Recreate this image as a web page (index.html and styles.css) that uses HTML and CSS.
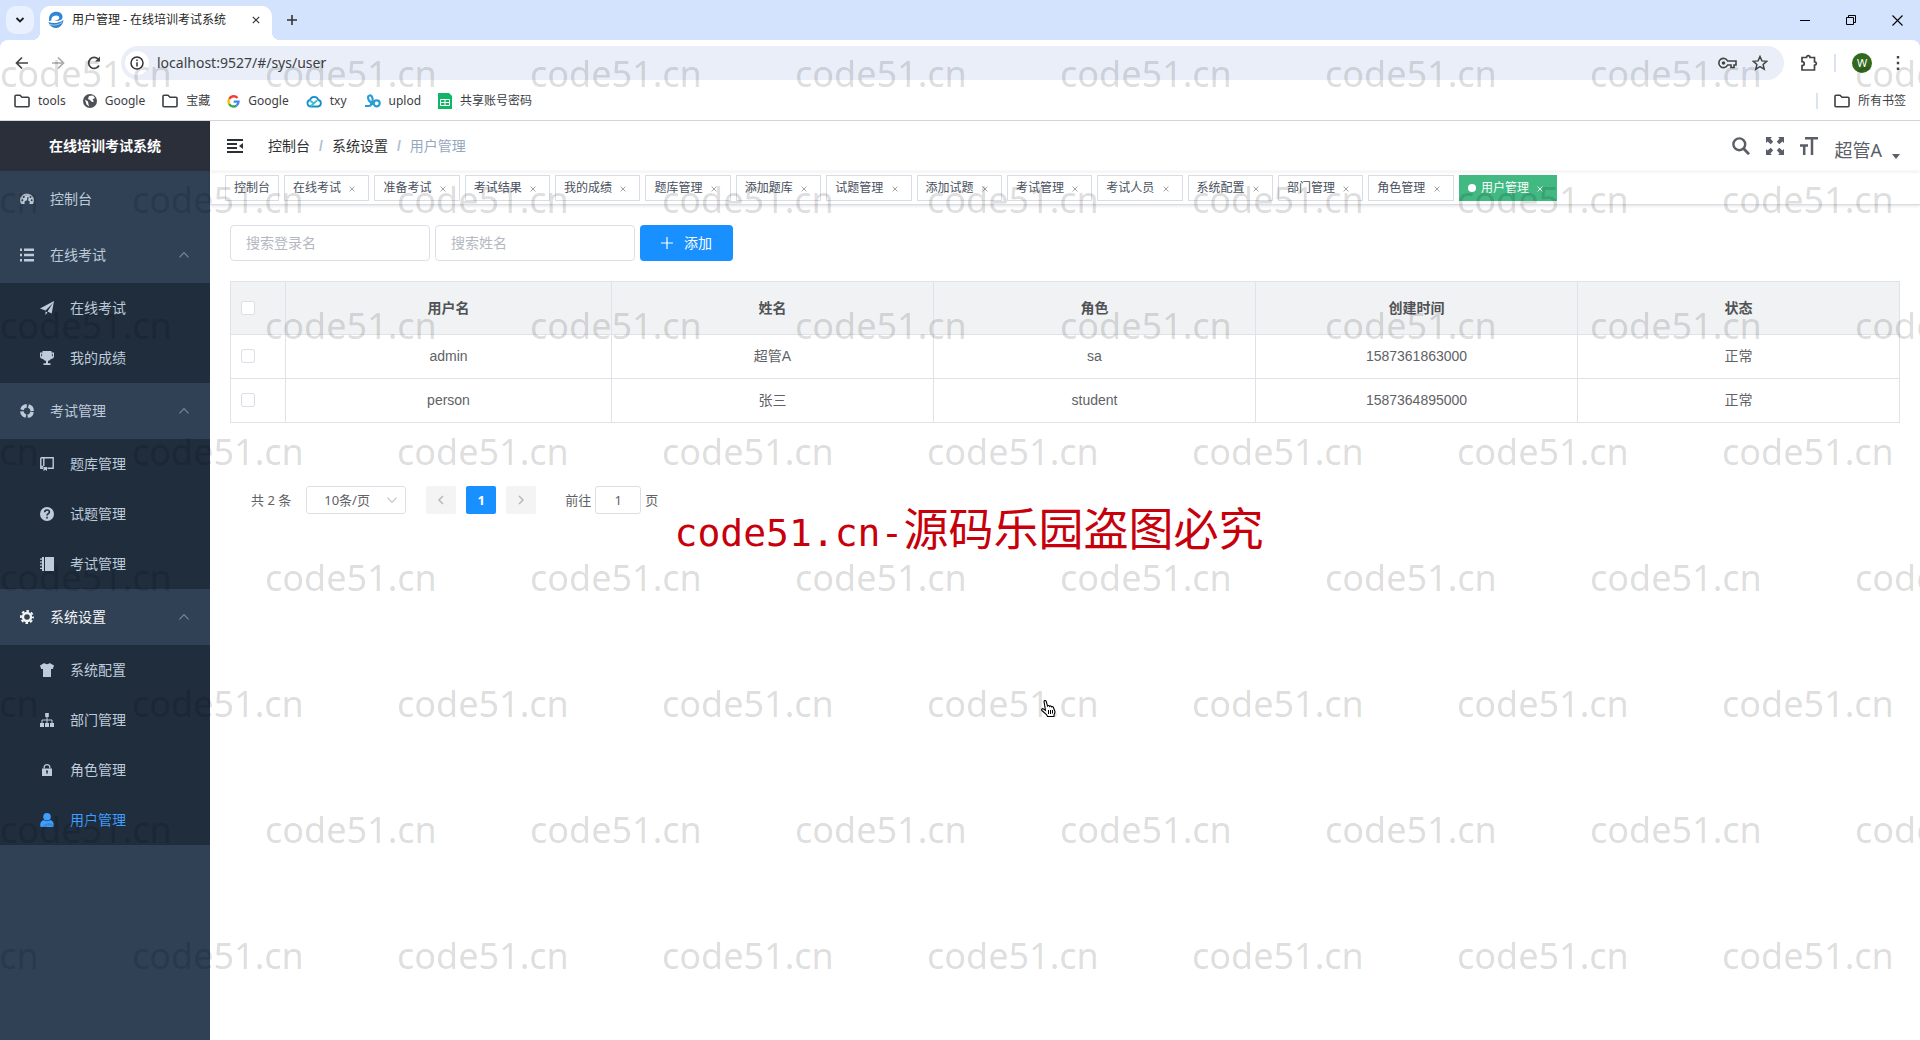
FILE: index.html
```html
<!DOCTYPE html>
<html lang="zh-CN">
<head>
<meta charset="utf-8">
<title>用户管理 - 在线培训考试系统</title>
<link rel="stylesheet" href="styles.css">
</head>
<body>
<svg class="sprite" aria-hidden="true">
  <symbol id="i-folder" viewBox="0 0 16 14"><path d="M1 2.200c0-.7.4-1 1-1h4l2 2h6c.7 0 1 .4 1 1v7.600c0 .7-.4 1-1 1H2c-.7 0-1-.4-1-1z" fill="none" stroke="currentColor" stroke-width="1.600"/></symbol>
  <symbol id="i-x" viewBox="0 0 10 10"><path d="M1 1l8 8M9 1L1 9" fill="none" stroke="currentColor" stroke-width="1.500"/></symbol>
  <symbol id="i-up" viewBox="0 0 12 12"><path d="M1.500 8.300L6 3.700l4.500 4.600" fill="none" stroke="currentColor" stroke-width="1.200"/></symbol>
  <symbol id="i-down" viewBox="0 0 12 12"><path d="M1.500 3.700L6 8.300l4.500-4.600" fill="none" stroke="currentColor" stroke-width="1.200"/></symbol>
</svg>

<header class="browser">
  <div class="tabstrip">
    <button class="tab-search" aria-label="搜索标签页"><svg width="10" height="10" viewBox="0 0 10 10"><path d="M1.500 3L5 6.500 8.500 3" fill="none" stroke="#1f1f1f" stroke-width="1.800"/></svg></button>
    <div class="tab">
      <svg width="16" height="18" viewBox="0 0 16 18"><path d="M1 8C1 3 5 .5 9 .8c4 .4 6 3.200 5.500 6-.6 2.700-4 3.600-8.500 3.200 3-.6 5.400-1.500 5.300-3.300C11.200 4.500 8 4 5.800 5 3.800 6 3 7.500 3.500 9.500L1 10z" fill="#2f86d6"/><path d="M.5 11c4 1.800 10 1.500 15-2-.8 5-4 8.300-8 8-3.500-.2-6-2.500-7-6z" fill="#3b7fc4"/><path d="M2 13.500c4 1.300 8 .6 12-2" stroke="#8fd0f0" fill="none"/></svg>
      <span class="tab-title">用户管理 - 在线培训考试系统</span>
      <button class="plain" aria-label="关闭标签页"><svg width="8" height="8"><use href="#i-x"/></svg></button>
    </div>
    <button class="plain new-tab" aria-label="新标签页"><svg width="12" height="12" viewBox="0 0 12 12"><path d="M6 1v10M1 6h10" stroke="#333" stroke-width="1.600"/></svg></button>
    <div class="window-controls">
      <button class="plain" aria-label="最小化"><svg width="10" height="10" viewBox="0 0 10 10"><path d="M0 5.500h10" stroke="#000"/></svg></button>
      <button class="plain" aria-label="还原"><svg width="10" height="10" viewBox="0 0 10 10"><path d="M.5 2.500h7v7h-7zM2.500 2.500v-2h7v7h-2" fill="none" stroke="#000"/></svg></button>
      <button class="plain" aria-label="关闭"><svg width="11" height="11" viewBox="0 0 11 11"><path d="M.5.5l10 10M10.500.5l-10 10" stroke="#000" stroke-width="1.100"/></svg></button>
    </div>
  </div>
  <div class="toolbar">
    <div class="nav-buttons">
      <button class="plain" aria-label="后退"><svg width="14" height="14" viewBox="0 0 14 14"><path d="M13 7H2M7 1.500L1.500 7 7 12.500" fill="none" stroke="#444" stroke-width="1.700"/></svg></button>
      <button class="plain" aria-label="前进"><svg width="14" height="14" viewBox="0 0 14 14"><path d="M1 7h11M7 1.500L12.500 7 7 12.500" fill="none" stroke="#aaa" stroke-width="1.700"/></svg></button>
      <button class="plain" aria-label="刷新"><svg width="14" height="14" viewBox="0 0 14 14"><path d="M12 9.500A5.500 5.500 0 1 1 11.500 3.500L12.500 5" fill="none" stroke="#444" stroke-width="1.700"/><path d="M13 .5v5H8z" fill="#444"/></svg></button>
    </div>
    <div class="omnibox">
      <span class="site-info"><svg width="14" height="14" viewBox="0 0 14 14"><circle cx="7" cy="7" r="6" fill="none" stroke="#333" stroke-width="1.500"/><path d="M7 6.200V10.500M7 3.500V5" stroke="#333" stroke-width="1.500"/></svg></span>
      <input class="url" aria-label="地址" value="localhost:9527/#/sys/user">
      <button class="plain" aria-label="密码"><svg width="19" height="12" viewBox="0 0 19 12"><path d="M9.600 4A4.600 4.600 0 1 0 9.600 8H13v2.500h3V8h2V4z" fill="none" stroke="#444" stroke-width="1.600"/><circle cx="5.500" cy="6" r="1.800" fill="#444"/></svg></button>
      <button class="plain" aria-label="收藏"><svg width="16" height="16" viewBox="0 0 16 16"><path d="M8 1.500l1.900 4.400 4.800.4-3.600 3.200 1.100 4.700L8 11.700l-4.200 2.500 1.100-4.700L1.300 6.300l4.800-.4z" fill="none" stroke="#444" stroke-width="1.500"/></svg></button>
    </div>
    <div class="profile">
      <button class="plain" aria-label="扩展程序"><svg width="18" height="18" viewBox="0 0 18 18"><path d="M2 3.500h4.500c0-2.500 3.500-2.500 3.500 0h4.500v4.300c2.500.2 2.500 3.200 0 3.400v4.800H2v-4.300c3-.3 3-3.700 0-4z" fill="none" stroke="#444" stroke-width="1.700"/></svg></button>
      <span class="divider"></span>
      <button class="avatar" aria-label="W 的账户">W</button>
      <button class="plain" aria-label="菜单"><svg width="4" height="16" viewBox="0 0 4 16"><path d="M.8 1h2.400v2.400H.8zM.8 6.800h2.400v2.400H.8zM.8 12.600h2.400V15H.8z" fill="#444"/></svg></button>
    </div>
  </div>
  <nav class="bookmarks" aria-label="书签">
    <a href="#"><svg width="16" height="14"><use href="#i-folder"/></svg>tools</a>
    <a href="#"><svg width="14" height="14" viewBox="0 0 14 14"><circle cx="7" cy="7" r="7" fill="#4d5156"/><path d="M2 5.500l3 2 .5 3 1 2-3-2zM6 2l4-.5L12 4 9.500 5.500 11 7.500 9 8 7 6 5 5z" fill="#fff"/></svg>Google</a>
    <a href="#"><svg width="16" height="14"><use href="#i-folder"/></svg>宝藏</a>
    <a href="#"><svg width="13" height="13" viewBox="0 0 13 13" fill="none" stroke-width="2.400"><path d="M10.500 3A5 5 0 0 0 2.200 4" stroke="#ea4335"/><path d="M2.200 4a5.200 5.200 0 0 0 0 5" stroke="#fbbc05"/><path d="M2.200 9a5 5 0 0 0 7.300 1.600" stroke="#34a853"/><path d="M9.500 10.600A5 5 0 0 0 11.500 6.600H6.700" stroke="#4285f4"/></svg>Google</a>
    <a href="#"><svg width="16" height="13" viewBox="0 0 16 13" fill="none" stroke="#168fc4" stroke-width="1.800"><path d="M4.500 11.500a3.300 3.300 0 0 1-.5-6.500 4.300 4.300 0 0 1 8.300 0 3.300 3.300 0 0 1-.3 6.500z"/><path d="M4.500 11.300L11 5.500M3.500 5.300L8 8.500" stroke="#2fc0d5"/></svg>txy</a>
    <a href="#"><svg width="17" height="14" viewBox="0 0 17 14" fill="none" stroke="#2b9dd6" stroke-width="2.200"><path d="M1 12h4c2.500 0 3-3 1-4.500S3 2 5.500 1.500 9 4 8.500 8v3"/><circle cx="12.700" cy="9.300" r="3"/></svg>uplod</a>
    <a href="#"><svg width="14" height="16" viewBox="0 0 14 16"><path d="M0 0h11l3 3v13H0z" fill="#10b566"/><path d="M2.500 6.500h9v6h-9zM2.500 9.500h9M7 6.500v6" fill="none" stroke="#fff"/></svg>共享账号密码</a>
    <a class="all-bookmarks" href="#"><svg width="16" height="14"><use href="#i-folder"/></svg>所有书签</a>
  </nav>
</header>

<div class="app">
  <aside class="sidebar">
    <h1 class="brand">在线培训考试系统</h1>
    <ul class="menu">
      <li><a class="item" href="#"><svg width="14" height="14" viewBox="0 0 14 14"><path d="M0 8.200a7 6.700 0 0 1 14 0c0 1.500-.4 2.800-1 3.800H9.300a2.400 2.400 0 0 0-1.200-3.500L8.700 5H7.400l-.5 3.400A2.400 2.400 0 0 0 4.700 12H1c-.6-1-1-2.300-1-3.800z" fill="currentColor"/><g fill="#304156"><circle cx="2.400" cy="8.300" r="1"/><circle cx="3.800" cy="4.900" r="1"/><circle cx="11.600" cy="8.300" r="1"/><circle cx="10.500" cy="4.900" r="1"/></g></svg>控制台</a></li>
      <li>
        <button class="item"><svg width="14" height="14" viewBox="0 0 14 14"><path d="M0 .5h2V3H0zM0 5.700h2v2.500H0zM0 11h2v2.500H0zM4 .5h10V3H4zM4 5.700h10v2.500H4zM4 11h10v2.500H4z" fill="currentColor"/></svg>在线考试<svg class="chev" width="12" height="12"><use href="#i-up"/></svg></button>
        <ul class="submenu">
          <li><a class="item" href="#"><svg width="14" height="14" viewBox="0 0 14 14"><path d="M14 0l-2.300 12.500L7.500 10.500 13 2 5.500 9.500 0 7.500zM5.500 10.500l2 1L5.500 14z" fill="currentColor"/></svg>在线考试</a></li>
          <li><a class="item" href="#"><svg width="14" height="14" viewBox="0 0 14 14"><path d="M2.500 0h9v1.500H14v4c0 1.500-1.500 2.500-3 2.500-.7 1-1.700 1.700-3 2v2.200h2.500V14h-7v-1.800H6V10c-1.300-.3-2.300-1-3-2-1.500 0-3-1-3-2.500v-4h2.500z" fill="currentColor"/><path d="M1.600 2.800v2.500M12.400 2.800v2.500" stroke="#1f2d3d" stroke-width=".8"/></svg>我的成绩</a></li>
        </ul>
      </li>
      <li>
        <button class="item"><svg width="14" height="14" viewBox="0 0 14 14"><circle cx="7" cy="7" r="5.200" fill="none" stroke="currentColor" stroke-width="3.400" stroke-dasharray="6.400 1.760" stroke-dashoffset="-.9"/></svg>考试管理<svg class="chev" width="12" height="12"><use href="#i-up"/></svg></button>
        <ul class="submenu">
          <li><a class="item" href="#"><svg width="14" height="14" viewBox="0 0 14 14"><path d="M.8.800h12.400v10.400H7.500M3 11.200H.8V.8M3.800 1v8M.8 9.500h2.500" fill="none" stroke="currentColor" stroke-width="1.400"/><path d="M3.500 10h3.500v4l-1.700-1.200L3.500 14z" fill="currentColor"/></svg>题库管理</a></li>
          <li><a class="item" href="#"><svg width="14" height="14" viewBox="0 0 14 14"><circle cx="7" cy="7" r="7" fill="currentColor"/><path d="M4.700 5.300c0-3 4.700-3 4.700-.3C9.400 6.700 7 6.600 7 8.500M7 9.700v1.700" fill="none" stroke="#1f2d3d" stroke-width="1.600"/></svg>试题管理</a></li>
          <li><a class="item" href="#"><svg width="14" height="14" viewBox="0 0 14 14"><path d="M5 0h9v14H5zM2 0h2v14H2zM0 1.500h2.500v1.200H0zM0 4.500h2.500v1.200H0zM0 7.500h2.500v1.200H0zM0 10.800h2.500V12H0z" fill="currentColor"/></svg>考试管理</a></li>
        </ul>
      </li>
      <li>
        <button class="item is-open"><svg width="14" height="14" viewBox="0 0 14 14"><circle cx="7" cy="7" r="4" fill="none" stroke="currentColor" stroke-width="2.400"/><circle cx="7" cy="7" r="6" fill="none" stroke="currentColor" stroke-width="2" stroke-dasharray="2.600 2.110" stroke-dashoffset="1.300"/></svg>系统设置<svg class="chev" width="12" height="12"><use href="#i-up"/></svg></button>
        <ul class="submenu">
          <li><a class="item" href="#"><svg width="14" height="14" viewBox="0 0 14 14"><path d="M4.300 0c1 1.500 4.400 1.500 5.400 0L14 2.500 12.800 6H11v8H3V6H1.200L0 2.500z" fill="currentColor"/></svg>系统配置</a></li>
          <li><a class="item" href="#"><svg width="14" height="14" viewBox="0 0 14 14"><path d="M5.200 0h3.600v4H5.200zM0 10h4v4H0zM5 10h4v4H5zM10 10h4v4h-4z" fill="currentColor"/><path d="M7 4v6M2 10V7h10v3" fill="none" stroke="currentColor"/></svg>部门管理</a></li>
          <li><a class="item" href="#"><svg width="14" height="14" viewBox="0 0 14 14"><path d="M2 5.500h10V13H2z" fill="currentColor"/><path d="M4.200 5.500V4c0-3.300 5.600-3.300 5.600 0v1.500" fill="none" stroke="currentColor" stroke-width="1.300"/><path d="M7 7.500v3.300M6 8.200h2" stroke="#1f2d3d" stroke-width="1.300"/></svg>角色管理</a></li>
          <li><a class="item is-active" href="#"><svg width="14" height="14" viewBox="0 0 14 14"><circle cx="7" cy="3.800" r="3.800" fill="currentColor"/><path d="M3.500 7c2 1.500 5 1.500 7 0 2.500 1 3.500 3 3.200 6 0 .7-.5 1-1 1H1.300c-.5 0-1-.3-1-1C0 10 1 8 3.500 7z" fill="currentColor"/></svg>用户管理</a></li>
        </ul>
      </li>
    </ul>
  </aside>

  <div class="content">
    <div class="navbar">
      <button class="plain" aria-label="折叠菜单"><svg width="16" height="14" viewBox="0 0 16 14"><path d="M0 1h16M0 5h10M0 9h10M0 13h16" stroke="#2b2f36" stroke-width="1.800"/><path d="M16 4v6l-4-3z" fill="#2b2f36"/></svg></button>
      <ol class="breadcrumb">
        <li><a href="#">控制台</a></li>
        <li><a href="#">系统设置</a></li>
        <li><span>用户管理</span></li>
      </ol>
      <div class="actions">
        <button class="plain" aria-label="搜索"><svg width="18" height="18" viewBox="0 0 18 18"><circle cx="7.300" cy="7.300" r="5.900" fill="none" stroke="#5a5e66" stroke-width="2.400"/><path d="M11.500 11.500l5.500 5.700" stroke="#5a5e66" stroke-width="2.800"/></svg></button>
        <button class="plain" aria-label="全屏"><svg width="18" height="18" viewBox="0 0 18 18"><path d="M0 0h6L4.400 1.600 7.200 4.700 4.700 7.200 1.600 4.400 0 6zM18 0h-6l1.600 1.600-2.800 3.100 2.500 2.500 3.100-2.800L18 6zM0 18h6l-1.600-1.600 2.800-3.100-2.500-2.500-3.100 2.800L0 12zM18 18h-6l1.600-1.600-2.800-3.100 2.500-2.500 3.100 2.800L18 12z" fill="#5a5e66"/></svg></button>
        <button class="plain" aria-label="字体大小"><svg width="18" height="18" viewBox="0 0 18 18"><path d="M5 1.300h13M12 1v17M0 8.400h8M4.200 8v10" stroke="#5a5e66" stroke-width="2.500"/></svg></button>
        <button class="user-menu">超管A<svg width="8" height="5" viewBox="0 0 8 5"><path d="M0 0h8L4 5z" fill="#5a5e66"/></svg></button>
      </div>
    </div>

    <ul class="tags">
      <li><a href="#">控制台</a></li>
      <li><a href="#">在线考试</a> <button aria-label="关闭"><svg width="6" height="6"><use href="#i-x"/></svg></button></li>
      <li><a href="#">准备考试</a> <button aria-label="关闭"><svg width="6" height="6"><use href="#i-x"/></svg></button></li>
      <li><a href="#">考试结果</a> <button aria-label="关闭"><svg width="6" height="6"><use href="#i-x"/></svg></button></li>
      <li><a href="#">我的成绩</a> <button aria-label="关闭"><svg width="6" height="6"><use href="#i-x"/></svg></button></li>
      <li><a href="#">题库管理</a> <button aria-label="关闭"><svg width="6" height="6"><use href="#i-x"/></svg></button></li>
      <li><a href="#">添加题库</a> <button aria-label="关闭"><svg width="6" height="6"><use href="#i-x"/></svg></button></li>
      <li><a href="#">试题管理</a> <button aria-label="关闭"><svg width="6" height="6"><use href="#i-x"/></svg></button></li>
      <li><a href="#">添加试题</a> <button aria-label="关闭"><svg width="6" height="6"><use href="#i-x"/></svg></button></li>
      <li><a href="#">考试管理</a> <button aria-label="关闭"><svg width="6" height="6"><use href="#i-x"/></svg></button></li>
      <li><a href="#">考试人员</a> <button aria-label="关闭"><svg width="6" height="6"><use href="#i-x"/></svg></button></li>
      <li><a href="#">系统配置</a> <button aria-label="关闭"><svg width="6" height="6"><use href="#i-x"/></svg></button></li>
      <li><a href="#">部门管理</a> <button aria-label="关闭"><svg width="6" height="6"><use href="#i-x"/></svg></button></li>
      <li><a href="#">角色管理</a> <button aria-label="关闭"><svg width="6" height="6"><use href="#i-x"/></svg></button></li>
      <li class="is-active"><span class="dot"></span> <a href="#">用户管理</a> <button aria-label="关闭"><svg width="6" height="6"><use href="#i-x"/></svg></button></li>
    </ul>

    <main class="page">
      <form class="filters">
        <input type="text" placeholder="搜索登录名" aria-label="搜索登录名">
        <input type="text" placeholder="搜索姓名" aria-label="搜索姓名">
        <button type="button"><svg width="12" height="12" viewBox="0 0 12 12"><path d="M6 0v12M0 6h12" stroke="#fff" stroke-width="1.200"/></svg>添加</button>
      </form>

      <table class="users">
        <colgroup><col class="col-check"><col class="col-name"><col><col><col><col></colgroup>
        <thead>
          <tr><th><input type="checkbox" aria-label="全选"></th><th>用户名</th><th>姓名</th><th>角色</th><th>创建时间</th><th>状态</th></tr>
        </thead>
        <tbody>
          <tr><td><input type="checkbox" aria-label="选择 admin"></td><td>admin</td><td>超管A</td><td>sa</td><td>1587361863000</td><td>正常</td></tr>
          <tr><td><input type="checkbox" aria-label="选择 person"></td><td>person</td><td>张三</td><td>student</td><td>1587364895000</td><td>正常</td></tr>
        </tbody>
      </table>

      <div class="pagination">
        <span class="total">共 2 条</span>
        <span class="page-size"><select aria-label="每页条数"><option>10条/页</option></select><svg width="12" height="12"><use href="#i-down"/></svg></span>
        <div class="pager">
          <button aria-label="上一页" disabled><svg width="12" height="12" viewBox="0 0 12 12"><path d="M8 2L4 6l4 4" fill="none" stroke="currentColor" stroke-width="1.500"/></svg></button>
          <button class="is-current">1</button>
          <button aria-label="下一页" disabled><svg width="12" height="12" viewBox="0 0 12 12"><path d="M4 2l4 4-4 4" fill="none" stroke="currentColor" stroke-width="1.500"/></svg></button>
        </div>
        <label class="jump">前往<input type="text" value="1">页</label>
      </div>
    </main>
  </div>
</div>

<div class="watermark" aria-hidden="true">
  <div><span>code51.cn</span><span>code51.cn</span><span>code51.cn</span><span>code51.cn</span><span>code51.cn</span><span>code51.cn</span><span>code51.cn</span><span>code51.cn</span></div>
  <div><span>code51.cn</span><span>code51.cn</span><span>code51.cn</span><span>code51.cn</span><span>code51.cn</span><span>code51.cn</span><span>code51.cn</span><span>code51.cn</span></div>
  <div><span>code51.cn</span><span>code51.cn</span><span>code51.cn</span><span>code51.cn</span><span>code51.cn</span><span>code51.cn</span><span>code51.cn</span><span>code51.cn</span></div>
  <div><span>code51.cn</span><span>code51.cn</span><span>code51.cn</span><span>code51.cn</span><span>code51.cn</span><span>code51.cn</span><span>code51.cn</span><span>code51.cn</span></div>
  <div><span>code51.cn</span><span>code51.cn</span><span>code51.cn</span><span>code51.cn</span><span>code51.cn</span><span>code51.cn</span><span>code51.cn</span><span>code51.cn</span></div>
  <div><span>code51.cn</span><span>code51.cn</span><span>code51.cn</span><span>code51.cn</span><span>code51.cn</span><span>code51.cn</span><span>code51.cn</span><span>code51.cn</span></div>
  <div><span>code51.cn</span><span>code51.cn</span><span>code51.cn</span><span>code51.cn</span><span>code51.cn</span><span>code51.cn</span><span>code51.cn</span><span>code51.cn</span></div>
  <div><span>code51.cn</span><span>code51.cn</span><span>code51.cn</span><span>code51.cn</span><span>code51.cn</span><span>code51.cn</span><span>code51.cn</span><span>code51.cn</span></div>
</div>
<p class="notice"><span>code51.cn-</span>源码乐园盗图必究</p>
<svg class="pointer" width="16" height="18" viewBox="0 0 16 18" aria-hidden="true"><path d="M3 1.500c0-1.300 2-1.300 2.200 0L6.500 6c.6-.8 1.800-.6 2 .3.700-.7 1.900-.4 2 .5.900-.6 1.800 0 2 1l1.400 3.400c.3 1-.2 2-.7 3l-.3 2.300H6.500L5.500 14.500.9 10.500c-1-1 .4-2.400 1.600-1.500l2 1.300z" fill="#fff" stroke="#000" stroke-width="1.100"/><path d="M7.500 10v4M9.500 10v4M11.500 10v3.500" stroke="#000"/></svg>
</body>
</html>
```

FILE: styles.css
```css
* { box-sizing: border-box; }

body {
  position: relative;
  display: flex;
  flex-direction: column;
  min-height: 100vh;
  margin: 0;
  overflow-x: hidden;
  background: #fff;
  color: #606266;
  font: 14px/20px "Liberation Sans", "Noto Sans CJK SC", sans-serif;
}

button, input, select { margin: 0; font: inherit; color: inherit; }
button { display: inline-flex; align-items: center; justify-content: center; padding: 0; border: 0; background: none; }
a { color: inherit; text-decoration: none; }
ul, ol { margin: 0; padding: 0; list-style: none; }
svg { flex: none; }
.sprite { position: absolute; width: 0; height: 0; }
.plain { flex: none; color: #333; }

/* Browser chrome */
.browser {
  background: #d3e3fd;
  border-bottom: 1px solid #d5d8dc;
  color: #3c4043;
  font-family: "Noto Sans", "Noto Sans CJK SC", sans-serif;
  font-size: 12px;
}
.tabstrip { display: flex; align-items: center; height: 40px; padding-left: 6px; }
.tab-search { width: 28px; height: 28px; border-radius: 10px; background: #e9f1fe; }
.tab {
  position: relative;
  display: flex;
  align-items: center;
  align-self: flex-end;
  gap: 8px;
  width: 232px;
  height: 34px;
  margin-left: 6px;
  padding: 0 12px 6px 8px;
  border-radius: 10px 10px 0 0;
  background: #fff;
  color: #1f1f1f;
}
.tab::before, .tab::after {
  content: "";
  position: absolute;
  bottom: 0;
  width: 8px;
  height: 8px;
}
.tab::before { right: 100%; background: radial-gradient(circle at 0 0, transparent 8px, #fff 8px); }
.tab::after { left: 100%; background: radial-gradient(circle at 100% 0, transparent 8px, #fff 8px); }
.tab-title { flex: 1; white-space: nowrap; }
.new-tab { margin-left: 14px; }
.window-controls { display: flex; margin-left: auto; }
.window-controls button { width: 46px; height: 40px; }

.toolbar {
  display: flex;
  align-items: center;
  height: 46px;
  padding: 0 20px 0 15px;
  border-radius: 8px 8px 0 0;
  background: #fff;
}
.nav-buttons { display: flex; gap: 22px; }
.omnibox {
  display: flex;
  flex: 1;
  align-items: center;
  gap: 15px;
  height: 34px;
  margin: 0 16px 0 20px;
  padding: 0 16px 0 4px;
  border-radius: 17px;
  background: #e9eef8;
}
.site-info { display: grid; place-items: center; width: 24px; height: 24px; border-radius: 50%; background: #fff; }
.url { flex: 1; margin-left: -7px; padding: 0; border: 0; outline: 0; background: none; font-size: 14px; }
.profile { display: flex; align-items: center; gap: 16px; }
.avatar { width: 20px; height: 20px; margin-right: 8px; border-radius: 50%; background: #33691e; color: #fff; font-size: 11px; }
.divider { width: 2px; height: 18px; background: #dbe3f3; }

.bookmarks { display: flex; align-items: center; gap: 17px; height: 34px; padding: 0 14px 4px; background: #fff; white-space: nowrap; }
.bookmarks a { display: flex; align-items: center; gap: 8px; line-height: 16px; }
.bookmarks .all-bookmarks { margin-left: auto; padding-left: 16px; border-left: 2px solid #dbe3f3; }

/* Application */
.app { display: flex; flex: 1; }
.sidebar { flex: none; width: 210px; background: #304156; color: #bfcbd9; }
.brand { height: 50px; margin: 0; background: #2b2f3a; color: #fff; font-size: 14px; line-height: 50px; text-align: center; }
.item { display: flex; align-items: center; justify-content: flex-start; gap: 16px; width: 100%; height: 56px; padding: 0 20px; }
.chev { margin-left: auto; color: #7b8593; }
.submenu { background: #1f2d3d; }
.submenu .item { height: 50px; padding-left: 40px; }
.item.is-open { color: #f4f4f5; }
.item.is-active { color: #409eff; }

.content { flex: 1; min-width: 0; }
.navbar { display: flex; align-items: center; height: 50px; padding: 0 20px 0 17px; box-shadow: 0 1px 3px rgba(0, 21, 41, .08); }
.breadcrumb { display: flex; margin-left: 25px; color: #303133; }
.breadcrumb li + li::before { content: "/"; margin: 0 9px; color: #b4bccc; font-weight: 700; }
.breadcrumb span { color: #97a8be; }
.actions { display: flex; align-items: center; gap: 16px; margin-left: auto; }
.user-menu { gap: 10px; padding-top: 8px; color: #5a5e66; font: 18px/26px "Noto Sans", "Noto Sans CJK SC", sans-serif; }
.user-menu svg { margin-top: 12px; }

.tags { display: flex; gap: 5px; height: 34px; padding: 4px 15px 0; border-bottom: 1px solid #d8dce5; box-shadow: 0 1px 3px rgba(0, 0, 0, .12); }
.tags li { flex: none; height: 26px; padding: 0 8px; border: 1px solid #d8dce5; color: #495060; font-size: 12px; line-height: 24px; white-space: nowrap; }
.tags button { width: 16px; height: 16px; vertical-align: middle; color: #999; }
.tags .is-active { border-color: #42b983; background: #42b983; color: #fff; }
.tags .is-active button { color: #fff; }
.dot { display: inline-block; width: 8px; height: 8px; margin-right: 2px; border-radius: 50%; background: #fff; }

.page { padding: 20px; }
.filters { display: flex; gap: 5px; margin-bottom: 20px; }
.filters input { width: 200px; height: 36px; padding: 0 15px; border: 1px solid #dcdfe6; border-radius: 4px; background: #fff; }
.filters input::placeholder { color: #b4b8c0; opacity: 1; }
.filters button { gap: 11px; height: 36px; padding: 0 21px; border-radius: 4px; background: #1890ff; color: #fff; }

.users { width: 100%; table-layout: fixed; border-collapse: collapse; }
.users th, .users td { height: 44px; padding: 0 10px 2px; border: 1px solid #dfe3e8; text-align: center; }
.users th { height: 53px; padding-bottom: 0; background: #f0f2f4; color: #515256; font-weight: 700; }
.users th:first-child, .users td:first-child { text-align: left; }
.users input { display: block; appearance: none; width: 14px; height: 14px; border: 1px solid #dcdfe6; border-radius: 2px; background: #fff; }
.col-check { width: 55px; }
.col-name { width: 326px; }

.pagination { display: flex; align-items: center; margin: 63px 21px 0; font-family: "Noto Sans", "Noto Sans CJK SC", sans-serif; font-size: 13px; }
.page-size { display: flex; align-items: center; width: 100px; height: 28px; margin-left: 15px; padding-right: 7px; border: 1px solid #dcdfe6; border-radius: 3px; color: #c0c4cc; }
.page-size select { flex: 1; min-width: 0; padding: 0 0 0 17px; border: 0; appearance: none; background: none; color: #606266; }
.pager { display: flex; gap: 10px; margin: 0 29px 0 20px; }
.pager button { width: 30px; height: 28px; border-radius: 2px; background: #f4f4f5; color: #b4b8c0; font-weight: 700; }
.pager .is-current { background: #1890ff; color: #fff; }
.jump { display: flex; align-items: center; gap: 4px; }
.jump input { width: 46px; height: 28px; padding: 0; border: 1px solid #dcdfe6; border-radius: 3px; text-align: center; }

/* Layers above the page */
.watermark { position: absolute; inset: 0; overflow: hidden; padding-top: 11px; pointer-events: none; color: rgba(0, 0, 0, .15); font: 36px/126px "Noto Sans", sans-serif; }
.watermark div { display: flex; }
.watermark div:nth-child(even) { margin-left: -133px; }
.watermark span { flex: none; width: 265px; }
.notice { position: absolute; top: 497px; left: 0; right: 0; margin: 0; padding-left: 18px; pointer-events: none; color: #c7000b; font: 45px/60px "Noto Sans CJK SC", sans-serif; text-align: center; white-space: nowrap; }
.notice span { font-family: "DejaVu Sans Mono", monospace; font-size: 38px; }
.pointer { position: absolute; top: 700px; left: 1041px; pointer-events: none; }
```
